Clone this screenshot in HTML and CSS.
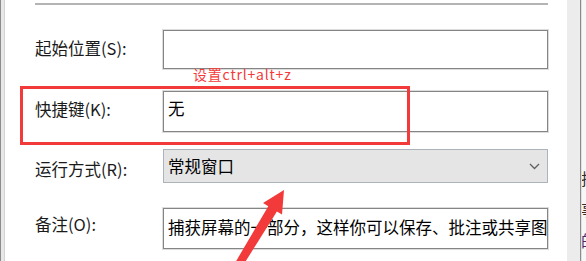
FILE: index.html
```html
<!DOCTYPE html>
<html lang="zh-CN">
<head>
    <meta charset="UTF-8">
    <title>快捷方式属性</title>
    <link rel="stylesheet" href="styles.css">
</head>
<body>
    <div class="window">
        <div class="frame-left"></div>
        <div class="panel">
            <div class="separator"></div>
            <div class="field field-start">
                <label class="label">起始位置(S):</label>
                <div class="input"></div>
            </div>
            <div class="field field-hotkey">
                <label class="label">快捷键(K):</label>
                <div class="input"><span class="value value-hotkey">无</span></div>
            </div>
            <div class="field field-run">
                <label class="label">运行方式(R):</label>
                <div class="select">
                    <span class="value">常规窗口</span>
                    <svg class="chevron" width="11" height="7" viewBox="0 0 11 7">
                        <polyline points="1,1 5.5,5.5 10,1" fill="none" stroke="#606060" stroke-width="1.3"/>
                    </svg>
                </div>
            </div>
            <div class="field field-note">
                <label class="label">备注(O):</label>
                <div class="input"><span class="value">捕获屏幕的一部分，这样你可以保存、批注或共享图像。</span></div>
            </div>
        </div>
        <div class="side"></div>
        <div class="edge"></div>
        <div class="behind">
            <span>捕</span>
            <span>事</span>
            <span>的</span>
        </div>
    </div>

    <!-- annotations drawn over the dialog -->
    <div class="note-text">设置ctrl+alt+z</div>
    <div class="note-box"></div>
    <svg class="note-arrow" width="586" height="261" viewBox="0 0 586 261">
        <polygon points="284,190 282,214.5 276.9,211.4 239.7,270.8 232.9,266.6 268.3,206.2 263,203" fill="#f23a3a"/>
    </svg>
</body>
</html>
```

FILE: styles.css
```css
body {
    margin: 0;
    width: 586px;
    height: 261px;
    overflow: hidden;
    position: relative;
    font-family: "Noto Sans CJK SC", "Noto Sans", sans-serif;
    color: #000;
    background: #f7f7f7;
}
.window {
    display: flex;
    height: 261px;
}
.frame-left {
    width: 3px;
    flex-shrink: 0;
    background: #e8e8e8;
    border-left: 1px solid #8c8c8c;
    border-right: 1px solid #d2d2d2;
}
.panel {
    width: 562px;
    flex-shrink: 0;
    background: #fff;
    padding: 0 19px 0 30px;
    box-sizing: border-box;
}
.separator {
    margin-top: 3px;
    height: 2px;
    background: #b4b4b4;
}
.field {
    display: flex;
    align-items: flex-start;
}
.label {
    width: 128px;
    flex-shrink: 0;
    font-size: 16.5px;
    line-height: 20px;
    color: #1a1a1a;
}
.input {
    flex: 1;
    min-width: 0;
    height: 39px;
    border: 1px solid #858585;
    box-shadow: 0 0 0 1px #dcdcdc;
    box-sizing: border-box;
    overflow: hidden;
    white-space: nowrap;
}
.value {
    display: block;
    padding-left: 4px;
    font-size: 16.5px;
    line-height: 20px;
    margin-top: 8px;
}
.value-hotkey {
    margin-top: 6px;
}
.select {
    flex: 1;
    height: 34px;
    background: #e5e5e5;
    border: 1px solid #acb3bb;
    box-sizing: border-box;
    display: flex;
    align-items: center;
    justify-content: space-between;
    padding-right: 7px;
}
.select .value {
    margin-top: 0;
}
.field-start {
    margin-top: 25px;
}
.field-start .label {
    margin-top: 8px;
}
.field-hotkey {
    margin-top: 22px;
}
.field-hotkey .input {
    height: 41px;
}
.field-hotkey .label {
    margin-top: 8px;
}
.field-run {
    margin-top: 17px;
}
.field-run .label {
    margin-top: 10px;
}
.field-note {
    margin-top: 25px;
}
.field-note .input {
    height: 41px;
}
.field-note .label {
    margin-top: 6px;
}
.side {
    width: 13px;
    flex-shrink: 0;
    background: #ececec;
}
.edge {
    width: 1px;
    flex-shrink: 0;
    background: #8a8a8a;
}
.behind {
    flex: 1;
    min-width: 0;
    overflow: hidden;
    border-left: 1px solid #e0e0e0;
    padding-top: 168px;
    display: flex;
    flex-direction: column;
    font-size: 16px;
    line-height: 20px;
}
.behind span {
    margin-left: -1px;
    height: 38px;
    color: #3a2a20;
}
.behind span:last-child {
    color: #4a2a6a;
}
.note-text {
    position: absolute;
    left: 193px;
    top: 66px;
    font-size: 14px;
    line-height: 16px;
    letter-spacing: 0.8px;
    color: #f53a3a;
}
.note-box {
    position: absolute;
    left: 20px;
    top: 86px;
    width: 390px;
    height: 59px;
    border: 3px solid #f23a3a;
    box-sizing: border-box;
}
.note-arrow {
    position: absolute;
    left: 0;
    top: 0;
    pointer-events: none;
}
```
